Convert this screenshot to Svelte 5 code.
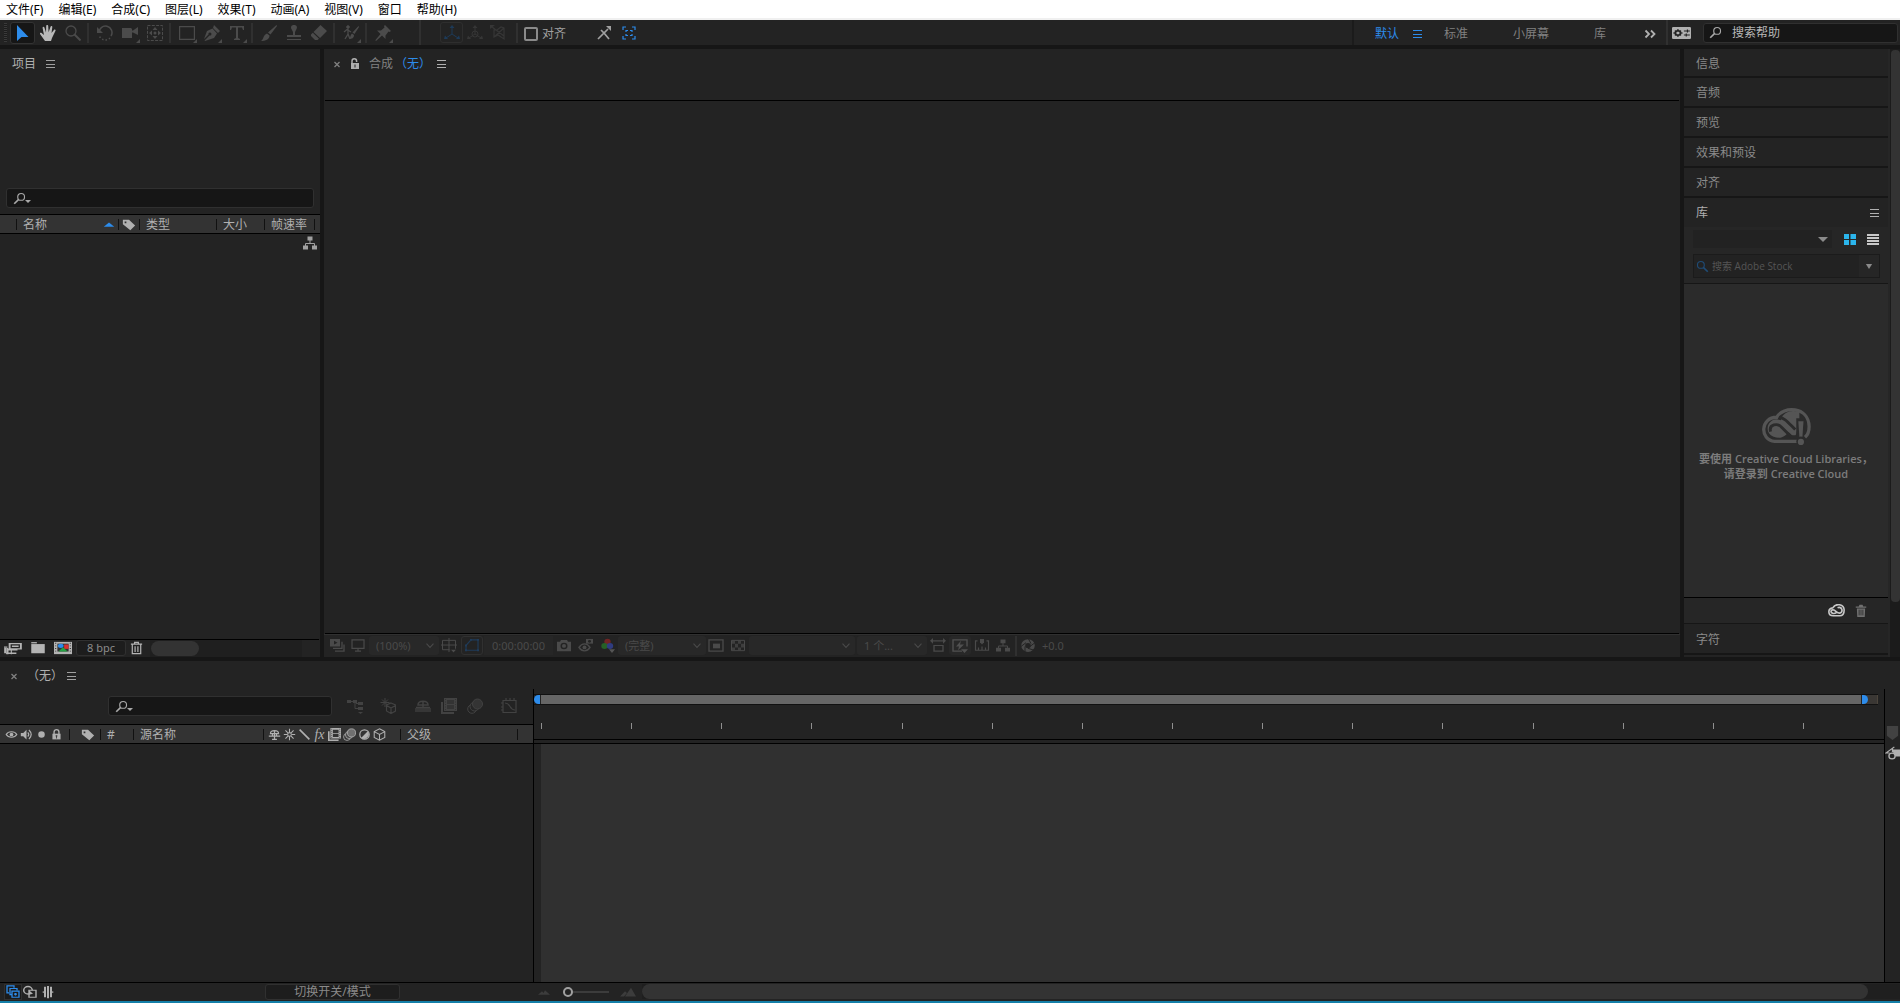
<script>
  const menus = [
    "文件(F)",
    "编辑(E)",
    "合成(C)",
    "图层(L)",
    "效果(T)",
    "动画(A)",
    "视图(V)",
    "窗口",
    "帮助(H)",
  ];

  const toolGroups = [
    [
      { icon: "select", label: "选取工具", state: "active" },
      { icon: "hand", label: "手形工具", state: "ready" },
      { icon: "zoom", label: "缩放工具" },
    ],
    [
      { icon: "rotate", label: "旋转工具" },
      { icon: "camera", label: "摄像机工具", more: true },
      { icon: "anchor", label: "锚点工具" },
    ],
    [
      { icon: "rect", label: "矩形工具", more: true },
      { icon: "pen", label: "钢笔工具", more: true },
      { icon: "type", label: "文字工具", more: true },
    ],
    [
      { icon: "brush", label: "画笔工具" },
      { icon: "stamp", label: "仿制图章工具" },
      { icon: "eraser", label: "橡皮擦工具" },
    ],
    [{ icon: "roto", label: "Roto 笔刷工具", more: true }],
    [{ icon: "pin", label: "操控点工具", more: true }],
  ];

  const axes = [
    { icon: "axisLocal", label: "本地轴模式", on: true },
    { icon: "axisWorld", label: "世界轴模式" },
    { icon: "axisView", label: "视图轴模式" },
  ];

  const closedPanels = ["信息", "音频", "预览", "效果和预设", "对齐"];
  const switches = ["shy", "sun", "slash", "fx", "film", "blur", "adjust", "cube"];
  const ticks = Array.from({ length: 15 }, (_, i) => i);

  let snapping = $state(false);
  let zoomLevel = $state(0);

  const icons = {
    select: `<path fill="currentColor" d="M2 0v16l4.500-4h7z"/>`,
    hand: `<path fill="currentColor" d="M5 16 0 9c-.6-1.200.9-1.700 1.600-1L4 10 2.600 3c-.2-1.300 1.400-1.600 1.800-.4L6 7.500 6.200 1c0-1.400 1.900-1.400 2 0l.4 6.300L10.500 1.700c.4-1.200 2-.9 1.800.5L11.500 8l2.400-3c.8-1 2.100-.3 1.600.8L12 13l-1 3z"/>`,
    zoom: `<g fill="none" stroke="currentColor"><circle cx="6" cy="6" r="5" stroke-width="1.3"/><path stroke-width="2" d="m9.500 9.500 6 6"/></g>`,
    rotate: `<path fill="none" stroke="currentColor" stroke-width="1.500" d="M2 8a6.500 6.500 0 1 1 12 3"/><path fill="none" stroke="currentColor" stroke-width="1.500" stroke-dasharray="1.500 2" d="M13 13a6.500 6.500 0 0 1-11-3"/><path fill="currentColor" d="M0 2v6h6z"/>`,
    camera: `<path fill="currentColor" d="M0 3h9l1 1v1.500h1L16 2v8l-5-2.500h-1V13H0z"/>`,
    anchor: `<path fill="none" stroke="currentColor" stroke-dasharray="3 1.300" d="M.5.500h15v15H.5z"/><path fill="currentColor" d="m8 2 2.500 3h-5zM8 14l2.500-3h-5zM2 8l3-2.500v5zM14 8l-3-2.500v5z"/><circle cx="8" cy="8" r="1.500" fill="currentColor"/>`,
    rect: `<path fill="none" stroke="currentColor" stroke-width="1.200" d="M.6 1.600h14.800v12.800H.6z"/>`,
    pen: `<path fill="currentColor" d="m10 0 6 6-2 2-5-5zM8.500 3.500l4.500 5L10 13 1 16l-.5-.5 5-5a1.500 1.500 0 1 0-1-1L0 14 3 6z"/>`,
    type: `<path fill="currentColor" d="M1 1h14v4h-1l-1-2.500H9V13l2 1v1H5v-1l2-1V2.500H3L2 5H1z"/>`,
    brush: `<path fill="currentColor" d="M15.500 0 16 1 9.500 9.500 7 7.500zM6 8.500l2.500 2c0 4-4 5.500-8.500 5.500 3-2 2-6 6-7.500z"/>`,
    stamp: `<path fill="currentColor" d="M8 0c3 0 3.500 2.500 2.500 4L9 7v3h6v2H1v-2h6V7L5.500 4C4.500 2.500 5 0 8 0zM1 14h14v1H1z"/>`,
    eraser: `<path fill="currentColor" d="m9.500 0 6.500 6-7 7L2.500 7zM1.800 7.700 8 13.700 6.500 15H4L0 11V9.500z"/>`,
    roto: `<g stroke="currentColor" fill="none"><circle cx="5" cy="2" r="1.300" fill="currentColor"/><path stroke-width="1.300" d="M5 3.500V9l-3 5M5 9l2 5M1 7l3-2.500L8 7"/></g><path fill="currentColor" d="M15.500 1 16 2l-4.500 7-2-1.500zM9 8.500l2 1.500c0 3-2 4-5 4 2-2 1-4 3-5.500z"/>`,
    pin: `<path fill="currentColor" d="m10 0 6 6-1.500 1-1-.5-3 4V14L7 10.500 1 16l-.7-.7L5.500 9 2 5.500h4L9.500 2.500 9 1z"/>`,
    axisLocal: `<g fill="none" stroke="currentColor"><path d="M8 2v7L2 13M8 9l6 4"/></g><path fill="currentColor" d="m8 0 2.500 3h-5zM0 14l1-3.500L4 14zM16 14l-1-3.500L12 14z"/>`,
    axisWorld: `<g fill="none" stroke="currentColor"><path d="M8 2v7L2 13M8 9l6 4"/><circle cx="8" cy="9" r="3"/></g><path fill="currentColor" d="m8 0 2.500 3h-5zM0 14l1-3.500L4 14zM16 14l-1-3.500L12 14z"/>`,
    axisView: `<path fill="none" stroke="currentColor" stroke-width="1.200" d="M4 5v7l4-2 6 4V3l-3-1-4 3zM2 2l12 9M4 12l10-9"/><path fill="currentColor" d="M0 0h5L0 4z"/>`,
    snapEdge: `<path fill="none" stroke="currentColor" stroke-width="1.700" d="m2 14 6-6 5 6M5 5l3 3 4-4"/><path fill="currentColor" d="M10 1h5v5z"/>`,
    snapBox: `<path fill="none" stroke="currentColor" stroke-width="1.200" d="M2 5V2h3M11 2h3v3M14 11v3h-3M5 14H2v-3M5 7V5.500h2M9 5.500h2V7M11 9v1.500H9M7 10.500H5V9"/>`,
    menu: `<path fill="none" stroke="currentColor" d="M4 4.500h9M4 8.500h9M4 11.500h9"/>`,
    chevrons: `<path fill="none" stroke="currentColor" stroke-width="1.800" d="m3.500 4.500 3.500 3.500-3.500 3.500M9 4.500 12.500 8 9 11.500"/>`,
    settings: `<rect y="2" width="16" height="12" rx="1" fill="currentColor"/><circle cx="5" cy="8" r="2.300" fill="none" stroke="#232323" stroke-width="1.500"/><path stroke="#232323" d="M5 4v8M1 8h8M2.500 5.500l5 5M7.500 5.500l-5 5M10 6h5M10 10h5M13 4.500v3M12 8.500v3"/><circle cx="5" cy="8" r="1.300" fill="currentColor"/>`,
    search: `<g fill="none" stroke="currentColor"><circle cx="10" cy="6" r="4.200" stroke-width="1.400"/><path stroke-width="2" d="m7 9-5.500 5.500"/></g>`,
    close: `<path fill="none" stroke="currentColor" stroke-width="1.300" d="m5.500 6 5 5M10.500 6l-5 5"/>`,
    unlock: `<path fill="currentColor" d="M4 7h8v6H4z"/><path fill="none" stroke="currentColor" stroke-width="1.500" d="M5 7V5a2.300 2.300 0 0 1 4.600 0v1"/><path fill="#232323" d="M7.500 8.500h1v3h-1z"/>`,
    lock: `<path fill="currentColor" d="M3 7h10v7H3z"/><path fill="none" stroke="currentColor" stroke-width="1.700" d="M5 8V5a3 3 0 0 1 6 0v3"/><path fill="#333" d="M7 9h2v1.500h-.5V13h-1v-2.500H7z"/>`,
    tag: `<path fill="currentColor" fill-rule="evenodd" d="M1 2h7l7 6.500L9.500 14 1 7zM3 4v2h2V4z"/>`,
    sort: `<path fill="currentColor" d="m8 5 6 5H2z"/>`,
    flow: `<path fill="currentColor" d="M5.500 1.500h5v4h-5zM1 10.500h5v4H1zM10 10.500h5v4h-5z"/><path fill="none" stroke="currentColor" d="M8 5v3.500M3.500 11V8.500h9V11"/>`,
    interpret: `<path fill="none" stroke="currentColor" stroke-width="1.700" d="M5 3h10v6H5zM7 6h6M1 8v6M3 7H0M3 10h9M2 14h9"/><path fill="currentColor" d="M2 8h2v7H2zM6 9h1v6H6z"/>`,
    folder: `<path fill="currentColor" d="M2 3.500h12V14H2z"/><path stroke="currentColor" stroke-width="1.500" d="M2 2h5"/>`,
    comp: `<path fill="#b4b4b4" d="M0 1h16v14H0z"/><path fill="#333" d="M3 3h10v9H3z"/><path stroke="#333" stroke-dasharray="1 2" d="M1.500 2v12M14.500 2v12"/><circle cx="6" cy="5.500" r="2.500" fill="#2d8ceb"/><path fill="#d93030" d="M9 4h4v5H9z"/><path fill="#25a244" d="m8 7 4 5H4z"/>`,
    trash: `<path fill="none" stroke="currentColor" stroke-width="1.300" d="M2 3.500h12M6 3V1.500h4V3M3.500 4v10.500h9V4M6.500 6v6.500M9.500 6v6.500"/>`,
    trashFull: `<path fill="currentColor" d="M1 3h4l1-2h4l1 2h4v1.500H1zM2.500 5.500h11L13 16H3z"/><path stroke="#262626" d="M5.500 7v7M8 7v7M10.500 7v7"/>`,
    eye: `<path fill="none" stroke="currentColor" stroke-width="1.500" d="M1.500 8C4 3.500 12 3.500 14.500 8 12 12.500 4 12.500 1.500 8z"/><circle cx="8" cy="8" r="2.300" fill="currentColor"/>`,
    speaker: `<path fill="currentColor" d="M1 6h3l4-4v12l-4-4H1z"/><path fill="none" stroke="currentColor" stroke-width="1.500" d="M9.500 5.500q2.500 2.500 0 5M11 2.500q5.500 5.500 0 11"/>`,
    dot: `<circle cx="8" cy="8" r="4" fill="currentColor"/>`,
    shy: `<path fill="none" stroke="currentColor" stroke-width="1.500" d="M3 7c0-5 10-5 10 0zM1 10h14M8 3v11M5.500 7v3M10.500 7v3M5 14h6"/>`,
    sun: `<circle cx="8" cy="8" r="2.300" fill="none" stroke="currentColor" stroke-width="1.300"/><path stroke="currentColor" stroke-width="1.300" d="M8 1v4M8 11v4M1 8h4M11 8h4M3 3l3 3M10 10l3 3M13 3l-3 3M6 10l-3 3"/>`,
    slash: `<path stroke="currentColor" stroke-width="2" d="m2 2 12 12"/>`,
    film: `<path fill="currentColor" d="M0 4h2v10h11v2H0zM3 0h13v13H3z"/><path fill="#333" d="M6 2h7v4H6zM6 7h7v4H6z"/><path stroke="#333" stroke-dasharray="1 1.500" d="M4.500 1v11M14.500 1v11"/>`,
    blur: `<g stroke="currentColor"><circle cx="5" cy="11" r="4.300" fill="none"/><circle cx="7.500" cy="8.500" r="4.500" fill="#444"/><circle cx="10.500" cy="6" r="5" fill="#707070"/></g>`,
    blurOff: `<g stroke="currentColor"><circle cx="5" cy="11" r="4.300" fill="none"/><circle cx="7.500" cy="8.500" r="4.500" fill="#262626"/><circle cx="10.500" cy="6" r="5" fill="#343434"/></g>`,
    adjust: `<circle cx="8" cy="8" r="5.800" fill="none" stroke="currentColor" stroke-width="1.500"/><path fill="currentColor" d="M4 12A5.700 5.700 0 0 0 12 4z"/>`,
    cube: `<path fill="none" stroke="currentColor" stroke-width="1.300" d="m8 1 6.500 3.500v7L8 15l-6.500-3.500v-7zM1.500 4.500 8 8l6.500-3.500M8 8v7"/>`,
    views: `<path fill="currentColor" fill-rule="evenodd" d="M1 1h10v8H1zm4 2v4l3.500-2z"/><path fill="none" stroke="currentColor" stroke-width="1.300" d="M4 11h9V4M6 14h9V7"/>`,
    monitor: `<path fill="none" stroke="currentColor" stroke-width="1.200" d="M2 2h12v9H2zM8 11v3M5 14h6"/>`,
    down: `<path fill="none" stroke="currentColor" stroke-width="1.200" d="m4 6 4 4 4-4"/>`,
    grid: `<path fill="none" stroke="currentColor" d="M1.500 2.500h13v10h-13zM8 0v15M0 7.500h16"/><path fill="currentColor" stroke="#232323" d="M9 12h7l-3.500 4z"/>`,
    mask: `<path fill="none" stroke="currentColor" stroke-width="1.200" d="M2 13V8l5-6h7v11z"/><path fill="currentColor" d="M1 12h2v2H1zM13 1h2v2h-2zM13 12h2v2h-2zM1 7h2v2H1zM6 1h2v2H6z"/>`,
    snapshot: `<path fill="currentColor" fill-rule="evenodd" d="M1 4h3l1-2h6l1 2h3v10H1zm7 1a3.500 3.500 0 1 0 0 7 3.500 3.500 0 0 0 0-7z"/><circle cx="8" cy="8.500" r="2" fill="currentColor"/>`,
    showShot: `<path fill="none" stroke="currentColor" stroke-width="1.500" d="M1 10c3-5 8-5 11 0-3 5-8 5-11 0z"/><circle cx="6.500" cy="10" r="2" fill="currentColor"/><path fill="currentColor" d="M8 1h7v5H8z"/><circle cx="11.500" cy="3.500" r="1.500" fill="#232323"/>`,
    rgb: `<circle cx="7.500" cy="4" r="3.200" fill="#702424"/><circle cx="4.500" cy="8.500" r="3.200" fill="#266026"/><circle cx="10" cy="8.500" r="3.200" fill="#303c80"/><path fill="#555" d="M9 12h6l-3 4z"/>`,
    region: `<path fill="none" stroke="currentColor" stroke-width="1.300" d="M1 2h14v12H1z"/><path fill="currentColor" d="M5 6h7v5H5z"/>`,
    checker: `<path fill="none" stroke="currentColor" d="M1.500 2.500h13v11h-13z"/><path fill="currentColor" opacity=".7" d="M2 3h3v3H2zM8 3h3v3H8zM5 6h3v4H5zM11 6h3v4h-3zM2 10h3v3H2zM8 10h3v3H8z"/>`,
    aspect: `<path fill="none" stroke="currentColor" stroke-width="1.300" d="M1 3h14M4 8h9v6H4z"/><path fill="currentColor" d="m0 3 3-3v6zM16 3l-3-3v6z"/>`,
    fast: `<path fill="none" stroke="currentColor" stroke-width="1.400" d="M15 9V2H1v12h9"/><path fill="currentColor" d="M9 3 4 9h3l-1 4 6-6H8zM9 12h7l-3.500 4z"/>`,
    timeline: `<path fill="none" stroke="currentColor" stroke-width="1.200" d="M3.500 3H1.500v10h13V3h-2M4.500 10v3M8 9v4M11.500 10v3"/><path fill="currentColor" d="M6 1h4v3.500L8 7 6 4.500z"/>`,
    aperture: `<circle cx="8" cy="8" r="4.800" fill="none" stroke="currentColor" stroke-width="4"/><path stroke="#232323" d="m8 0 3 6M15 5l-5 4M14 13l-6-2M5 15l0-6M1 9l5-4"/>`,
    branch: `<path fill="currentColor" d="M0 2h4v3H0zM6 2h4v3H6zM11 4h5v3h-5zM11 9h5v3h-5zM11 14h5l-2.500 2z"/><path fill="none" stroke="currentColor" d="M3 3.500h4M8 3v7.500h4M9 5.500h3"/>`,
    draft: `<path stroke="currentColor" d="M5 0v9M.5 4.500h9M2 1.500l6 6M8 1.500l-6 6"/><path fill="#232323" stroke="currentColor" stroke-width="1.200" d="m11 5 4.500 2v6L11 15.500 6.500 13V7zM6.500 7.500 11 10l4.500-2.500M11 10v5"/>`,
    shyOff: `<path fill="none" stroke="currentColor" stroke-width="1.500" d="M3 7c0-5 10-5 10 0zM1 9.500h14M8 3v7"/><path fill="currentColor" opacity=".6" d="M0 10h16v4H0z"/>`,
    graph: `<path fill="none" stroke="currentColor" stroke-width="1.200" d="M2 2.500h13v12H2zM4 5c6 0 4 7 10 7M0 5h2M0 9h2M0 12h2M5 0v2M9 0v2M13 0v2"/>`,
    tiles: `<path fill="currentColor" d="M2 3h5v5H2zM8.500 3h5.500v5H8.500zM2 9h5v5H2zM8.500 9h5.500v5H8.500z"/>`,
    list: `<path fill="currentColor" d="M2 3h12v2H2zM2 6h12v2H2zM2 9h12v2H2zM2 12h12v2H2z"/>`,
    triangle: `<path fill="currentColor" d="M3 6h10l-5 5z"/>`,
    layers: `<path fill="none" stroke="currentColor" stroke-width="1.300" d="M4 9H2V1h7v2M7 11H5V4h7v2M7 7h7v7H7zM9 10.500h3M10.500 9v3"/>`,
    modes: `<circle cx="6" cy="6" r="4.300" fill="none" stroke="currentColor" stroke-width="1.500"/><path fill="#232323" stroke="currentColor" stroke-width="1.400" d="M7 6h7v8H7z"/><path fill="currentColor" d="M7 6l4 4-4 1z"/>`,
    stretch: `<path fill="currentColor" d="M4 2h2v12H4V9L2 8l2-1zM10 2h2v5l2 1-2 1v5h-2zM7 1h2v14H7z"/>`,
    smallHill: `<path fill="currentColor" d="m2 11 4-4 1.500 2L9 6l5 5z"/>`,
    bigHill: `<path fill="currentColor" d="m0 13 5-6 2 2-3 4zM5 13l6-10 5 10z"/>`,
    marker: `<path fill="currentColor" d="M2 0h12v11l-6 5-6-5z"/>`,
    button: `<path fill="currentColor" d="M7 4h9v8h-5z"/><path fill="none" stroke="currentColor" stroke-width="1.400" d="M10 1 1 8h4M8 3v4"/><circle cx="7.500" cy="11.500" r="3.300" fill="#232323" stroke="currentColor" stroke-width="1.500"/>`,
  };
</script>

{#snippet icon(name)}
  <svg class="icon" viewBox="0 0 16 16" preserveAspectRatio="none" aria-hidden="true">
    {@html icons[name]}
  </svg>
{/snippet}

{#snippet cloud(bg)}
  <svg class="cloud" viewBox="0 0 48 36" aria-hidden="true">
    <path
      fill="none"
      stroke="currentColor"
      stroke-width="3.2"
      d="M35 32.500H13C-2 31-1 9 15 9c6-11 31-11 31.500 9 0 5-1 8-4 10.500"
    />
    <path
      fill="currentColor"
      d="M15 11c-9 0-13 13-3 17 8 3 12-2 15-5l-9-8c7 6 14 15 15 13l4-14V4C28 1 22 5 20 9l-1 3z"
    />
    <path
      fill="none"
      stroke={bg}
      stroke-width="2.8"
      d="M9 23c-2-7 7-9 11-4l9 9h5M17 9c6 1 8 4 16 12"
    />
    <path fill={bg} d="M34 10h8v15h-8z" />
    <path fill="currentColor" d="M36 13h5l-1 15h-3z" />
    <circle cx="38.500" cy="32.500" r="4.500" fill={bg} />
    <circle cx="38.500" cy="33" r="3" fill="currentColor" />
  </svg>
{/snippet}

<div class="app">
  <nav class="menubar">
    {#each menus as menu}
      <button>{menu}</button>
    {/each}
  </nav>

  <header class="toolbar">
    <span class="grip"></span>
    {#each toolGroups as group}
      <div class="tools">
        {#each group as tool}
          <button class="tool {tool.state ?? ''}" aria-label={tool.label}>
            {@render icon(tool.icon)}
            {#if tool.more}<span class="more"></span>{/if}
          </button>
        {/each}
      </div>
      <span class="sep"></span>
    {/each}
    <span class="sep wide"></span>
    <div class="axes">
      {#each axes as axis}
        <button class="axis" class:on={axis.on} aria-label={axis.label}>
          {@render icon(axis.icon)}
        </button>
      {/each}
    </div>
    <span class="sep"></span>
    <label class="snap"><input type="checkbox" bind:checked={snapping} />对齐</label>
    <button class="snap-option" aria-label="对齐到边缘">{@render icon("snapEdge")}</button>
    <button class="snap-option blue" aria-label="对齐到包围框">{@render icon("snapBox")}</button>

    <div class="workspaces">
      <button class="blue">默认</button>
      <button class="blue ws-menu" aria-label="工作区菜单">{@render icon("menu")}</button>
      <button class="standard">标准</button>
      <button class="small-screen">小屏幕</button>
      <button class="library">库</button>
      <button class="overflow" aria-label="更多工作区">{@render icon("chevrons")}</button>
    </div>
    <div class="help">
      <button class="sync" aria-label="工作区设置">{@render icon("settings")}</button>
      <label class="field help-field">
        {@render icon("search")}
        <input type="text" placeholder="搜索帮助" aria-label="搜索帮助" />
      </label>
    </div>
  </header>

  <main class="upper">
    <section class="panel project">
      <div class="tab project-tab">
        <span class="title">项目</span>
        <button aria-label="面板菜单">{@render icon("menu")}</button>
      </div>
      <div class="preview"></div>
      <label class="field project-search">
        {@render icon("search")}<span class="caret"></span>
        <input type="text" aria-label="搜索项目" />
      </label>
      <table class="columns">
        <thead>
          <tr>
            <th class="c-edge"></th>
            <th class="c-name"><span>名称{@render icon("sort")}</span></th>
            <th class="c-tag">{@render icon("tag")}</th>
            <th class="c-type">类型</th>
            <th class="c-size">大小</th>
            <th class="c-rate">帧速率</th>
            <th></th>
          </tr>
        </thead>
      </table>
      <div class="items">
        <button aria-label="项目流程图">{@render icon("flow")}</button>
      </div>
      <footer class="project-footer">
        <button aria-label="解释素材">{@render icon("interpret")}</button>
        <button aria-label="新建文件夹">{@render icon("folder")}</button>
        <button aria-label="新建合成">{@render icon("comp")}</button>
        <button class="depth">8 bpc</button>
        <button class="bin" aria-label="删除">{@render icon("trash")}</button>
        <div class="scroll"><span></span></div>
      </footer>
    </section>

    <section class="panel viewer">
      <div class="tab viewer-tab">
        <button class="dim" aria-label="关闭">{@render icon("close")}</button>
        <button aria-label="锁定">{@render icon("unlock")}</button>
        <span class="name">合成</span>
        <span class="blue">（无）</span>
        <button aria-label="面板菜单">{@render icon("menu")}</button>
      </div>
      <div class="stage"></div>
      <footer class="viewer-footer">
        <button aria-label="始终预览此视图">{@render icon("views")}</button>
        <button class="primary" aria-label="主查看器">{@render icon("monitor")}</button>
        <label class="drop magnify">
          <select aria-label="放大率"><option>(100%)</option></select>
          {@render icon("down")}
        </label>
        <button aria-label="网格和参考线">{@render icon("grid")}</button>
        <button class="mask" aria-label="蒙版可见性">{@render icon("mask")}</button>
        <button class="time">0:00:00:00</button>
        <div class="shots">
          <button aria-label="拍摄快照">{@render icon("snapshot")}</button>
          <button aria-label="显示快照">{@render icon("showShot")}</button>
          <button aria-label="通道">{@render icon("rgb")}</button>
        </div>
        <label class="drop quality">
          <select aria-label="分辨率"><option>(完整)</option></select>
          {@render icon("down")}
        </label>
        <button aria-label="目标区域">{@render icon("region")}</button>
        <button class="checker" aria-label="透明网格">{@render icon("checker")}</button>
        <label class="drop camera">
          <select aria-label="3D 视图"><option></option></select>
          {@render icon("down")}
        </label>
        <label class="drop layout">
          <select aria-label="视图布局"><option>1 个...</option></select>
          {@render icon("down")}
        </label>
        <button aria-label="像素长宽比">{@render icon("aspect")}</button>
        <button class="fast" aria-label="快速预览">{@render icon("fast")}</button>
        <button aria-label="时间轴">{@render icon("timeline")}</button>
        <button class="chart" aria-label="流程图">{@render icon("flow")}</button>
        <span class="sep"></span>
        <button aria-label="重置曝光度">{@render icon("aperture")}</button>
        <span class="exposure">+0.0</span>
      </footer>
    </section>

    <aside class="side">
      <div class="stack">
        {#each closedPanels as name}
          <button class="closed">{name}</button>
        {/each}
        <section class="libraries">
          <div class="lib-head">
            <span>库</span>
            <button aria-label="面板菜单">{@render icon("menu")}</button>
          </div>
          <div class="lib-tools">
            <div class="lib-row">
              <label class="lib-select">
                <select aria-label="选择库"><option></option></select>
                {@render icon("triangle")}
              </label>
              <button class="tiles" aria-label="图标视图">{@render icon("tiles")}</button>
              <button class="list" aria-label="列表视图">{@render icon("list")}</button>
            </div>
            <div class="stock">
              <span class="glass">{@render icon("search")}</span>
              <input type="text" placeholder="搜索 Adobe Stock" aria-label="搜索 Adobe Stock" />
              <button aria-label="搜索范围">{@render icon("triangle")}</button>
            </div>
          </div>
          <div class="sign-in">
            {@render cloud("#2b2b2b")}
            <p>要使用 Creative Cloud Libraries，<br />请登录到 Creative Cloud</p>
          </div>
          <footer class="lib-footer">
            <button class="cc" aria-label="Creative Cloud">
              <svg viewBox="0 0 16 12" aria-hidden="true">
                <path
                  fill="none"
                  stroke="currentColor"
                  stroke-width="1.5"
                  d="M11 11H5C-.5 11-.5 4 4.500 3.500 7-1 15-.5 15.200 5.500c0 3-1 5.500-4.200 5.500z"
                />
                <path
                  fill="none"
                  stroke="currentColor"
                  stroke-width="1.600"
                  d="M8 8C3 11 1 5 5 5.500c2 0 3 3 6 3 4-1 2-7-2-5"
                />
              </svg>
            </button>
            <button class="lib-bin" aria-label="删除">{@render icon("trashFull")}</button>
          </footer>
        </section>
        <button class="closed last">字符</button>
      </div>
      <div class="side-scroll"><span></span></div>
    </aside>
  </main>

  <section class="timeline">
    <div class="tab timeline-tab">
      <button class="dim" aria-label="关闭">{@render icon("close")}</button>
      <span class="title">（无）</span>
      <button aria-label="面板菜单">{@render icon("menu")}</button>
    </div>
    <div class="timeline-main">
      <div class="layers">
        <div class="layer-tools">
          <label class="field layer-search">
            {@render icon("search")}<span class="caret"></span>
            <input type="text" aria-label="搜索图层" />
          </label>
          <button aria-label="合成微型流程图">{@render icon("branch")}</button>
          <button class="draft" aria-label="草图 3D">{@render icon("draft")}</button>
          <button class="shy" aria-label="隐藏图层">{@render icon("shyOff")}</button>
          <button aria-label="帧混合">{@render icon("film")}</button>
          <button aria-label="运动模糊">{@render icon("blurOff")}</button>
          <button class="graph" aria-label="图表编辑器">{@render icon("graph")}</button>
        </div>
        <table class="columns">
          <thead>
            <tr>
              <th class="t-av">
                <span>
                  {@render icon("eye")}{@render icon("speaker")}{@render icon("dot")}{@render icon("lock")}
                </span>
              </th>
              <th class="t-tag">{@render icon("tag")}</th>
              <th class="t-num">#</th>
              <th class="t-name">源名称</th>
              <th class="t-switch">
                <span>
                  {#each switches as name}
                    {#if name === "fx"}
                      <i>fx</i>
                    {:else}
                      {@render icon(name)}
                    {/if}
                  {/each}
                </span>
              </th>
              <th class="t-parent">父级</th>
              <th></th>
            </tr>
          </thead>
        </table>
      </div>
      <div class="tracks">
        <div class="ruler">
          <div class="work-area">
            <span class="handle start"></span>
            <span class="range"></span>
            <span class="handle-end"><span class="handle end"></span></span>
          </div>
          <div class="ticks">
            {#each ticks as tick (tick)}
              <span></span>
            {/each}
          </div>
        </div>
        <div class="track-body"></div>
      </div>
      <div class="markers">
        <button class="marker" aria-label="合成标记">{@render icon("marker")}</button>
        <button aria-label="合成按钮">{@render icon("button")}</button>
      </div>
    </div>
    <footer class="timeline-footer">
      <button class="blue boxed" aria-label="图层开关">{@render icon("layers")}</button>
      <button aria-label="转换控制">{@render icon("modes")}</button>
      <button aria-label="入点出点">{@render icon("stretch")}</button>
      <button class="toggle">切换开关/模式</button>
      <div class="zoomer">
        {@render icon("smallHill")}
        <input type="range" min="0" max="100" bind:value={zoomLevel} aria-label="缩放时间" />
        {@render icon("bigHill")}
      </div>
      <div class="time-scroll"><span></span></div>
    </footer>
  </section>
  <div class="taskbar-edge"></div>
</div>

<style>
  :global(body) {
    margin: 0;
    background: #161616;
  }

  .app {
    display: flex;
    flex-direction: column;
    height: 100vh;
    overflow: hidden;
    color: #a0a0a0;
    font: 12px/16px "Noto Sans", "Noto Sans CJK SC", sans-serif;
  }

  .app * {
    box-sizing: border-box;
  }

  button,
  input,
  select {
    margin: 0;
    padding: 0;
    border: 0;
    background: none;
    color: inherit;
    font: inherit;
    outline: none;
  }

  button {
    display: flex;
    align-items: center;
    flex: none;
    white-space: nowrap;
  }

  select {
    appearance: none;
    flex: 1;
    min-width: 0;
  }

  .icon {
    display: block;
    flex: none;
    width: 16px;
    height: 16px;
  }

  .blue {
    color: #2d8ceb;
  }

  .dim {
    color: #808080;
  }

  /* menu bar */
  .menubar {
    display: flex;
    flex: none;
    gap: 15px;
    height: 20px;
    padding: 2px 0 0 6px;
    border-bottom: 2px solid #f0f0f0;
    background: #fff;
    color: #000;
  }

  /* toolbar */
  .toolbar {
    display: flex;
    flex: none;
    align-items: center;
    height: 25px;
    background: #232323;
  }

  .grip {
    width: 3px;
    height: 19px;
    margin: 0 3px 0 4px;
    background: repeating-linear-gradient(#3a3a3a 0 1px, #1c1c1c 1px 2px);
  }

  .tools,
  .axes {
    display: flex;
    color: #4b4b4b;
  }

  .tool {
    position: relative;
    justify-content: center;
    width: 25px;
    height: 22px;
  }

  .tool.active {
    border: 1px solid #333;
    border-radius: 3px;
    background: #161616;
    color: #2d8ceb;
  }

  .tool.ready {
    color: #b8b8b8;
  }

  .more {
    position: absolute;
    right: 2px;
    bottom: 1px;
    border: 2px solid transparent;
    border-right-color: #4b4b4b;
    border-bottom-color: #4b4b4b;
  }

  .sep {
    flex: none;
    width: 2px;
    height: 20px;
    margin: 0 3px 0 2px;
    background: #303030;
  }

  .tools:nth-last-of-type(4) + .sep {
    display: none;
  }

  .sep.wide {
    height: 25px;
    margin-left: 24px;
  }

  .axes {
    margin-left: 16px;
    color: #363636;
  }

  .axis {
    justify-content: center;
    width: 23px;
    height: 21px;
    border: 1px solid transparent;
    border-radius: 3px;
  }

  .axis.on {
    border-color: #2e2e2e;
    color: #1d3a58;
  }

  .axes + .sep {
    margin-left: 7px;
  }

  .snap {
    display: flex;
    align-items: center;
    gap: 4px;
    margin: 2px 30px 0 3px;
  }

  .snap input {
    appearance: none;
    width: 14px;
    height: 14px;
    border: 2px solid #8a8a8a;
    border-radius: 2px;
  }

  .snap-option {
    margin-right: 9px;
  }

  .workspaces {
    display: flex;
    align-items: center;
    height: 25px;
    margin-left: auto;
    padding: 2px 0 0 21px;
    border-left: 2px solid #1b1b1b;
    color: #808080;
  }

  .workspaces .blue {
    color: #2d8ceb;
  }

  .ws-menu {
    margin: 0 19px 0 10px;
  }

  .standard {
    margin-right: 45px;
  }

  .small-screen {
    margin-right: 45px;
  }

  .library {
    margin-right: 36px;
  }

  .overflow {
    margin-right: 1px;
    color: #b0b0b0;
  }

  .help {
    display: flex;
    align-items: center;
    height: 25px;
    margin-left: 7px;
    padding-left: 4px;
    border-left: 2px solid #303030;
  }

  .sync {
    width: 20px;
    margin-right: 11px;
    color: #b0b0b0;
  }

  .sync .icon {
    width: 19px;
    height: 16px;
  }

  .field {
    display: flex;
    align-items: center;
    height: 20px;
    padding-left: 6px;
    border: 1px solid #303030;
    border-radius: 3px;
    background: #161616;
  }

  .field input {
    flex: 1;
    min-width: 0;
    align-self: stretch;
  }

  .field .icon {
    width: 13px;
    height: 13px;
    color: #a8a8a8;
  }

  .caret {
    margin: 6px 0 0 -1px;
    border: 3px solid transparent;
    border-top-color: #a8a8a8;
    border-bottom: 0;
  }

  .help-field {
    width: 195px;
    margin-right: 2px;
    padding-left: 5px;
  }

  .help-field input {
    padding-left: 10px;
  }

  .help-field input::placeholder {
    color: #b8b8b8;
  }

  /* upper panels */
  .upper {
    display: flex;
    flex: 608 1 0;
    gap: 4px;
    min-height: 0;
    margin: 4px 0;
  }

  .panel {
    display: flex;
    flex-direction: column;
    background: #232323;
  }

  .tab {
    display: flex;
    flex: none;
    align-items: center;
    height: 29px;
  }

  .title {
    color: #b0b0b0;
  }

  .project {
    flex: none;
    width: 320px;
  }

  .project-tab {
    gap: 6px;
    padding-left: 12px;
  }

  .preview {
    flex: none;
    height: 110px;
  }

  .project-search {
    flex: none;
    margin: 0 6px;
  }

  .columns {
    flex: none;
    width: 100%;
    margin: 6px 0 0;
    border: solid #000;
    border-width: 1px 0;
    border-spacing: 0;
    background: #333;
    table-layout: fixed;
  }

  .columns th {
    height: 18px;
    padding: 1px 0 0 6px;
    background: linear-gradient(#111, #111) right center / 1px 11px no-repeat;
    color: #b0b0b0;
    font-weight: normal;
    text-align: left;
  }

  .columns th:last-child {
    background: none;
  }

  .columns th span {
    display: flex;
    align-items: center;
  }

  .c-edge {
    width: 17px;
  }

  .c-name {
    width: 102px;
  }

  .c-name .icon {
    margin-left: auto;
    margin-right: 3px;
    color: #2d8ceb;
  }

  .columns .c-tag,
  .columns .t-tag {
    padding-left: 3px;
  }

  .c-tag {
    width: 21px;
  }

  .columns .icon {
    width: 14px;
    height: 14px;
  }

  .c-type {
    width: 77px;
  }

  .c-size {
    width: 48px;
  }

  .c-rate {
    width: 50px;
  }

  .items {
    flex: 1;
    padding: 1px 2px;
  }

  .items button {
    margin-left: auto;
  }

  .project-footer {
    display: flex;
    align-items: center;
    gap: 7px;
    height: 18px;
    margin-right: 1px;
    padding: 0 0 1px 4px;
    border-top: 1px solid #000;
    color: #b4b4b4;
  }

  .project-footer .icon {
    width: 18px;
    height: 14px;
  }

  .project-footer .depth {
    justify-content: center;
    width: 50px;
    height: 16px;
    margin-left: -3px;
    border: 1px solid #303030;
    border-radius: 3px;
    background: #1d1d1d;
    color: #8c8c8c;
    font-size: 11px;
  }

  .project-footer .bin {
    margin: 0 -1px 0 -4px;
  }

  .project-footer .bin .icon {
    width: 15px;
  }

  .scroll {
    flex: 1;
    height: 17px;
    margin-right: 17px;
    background: #1f1f1f;
  }

  .scroll span {
    display: block;
    width: 48px;
    height: 15px;
    margin: 1px;
    border-radius: 8px;
    background: #333;
  }

  /* composition viewer */
  .viewer {
    flex: 1;
    min-width: 0;
  }

  .viewer-tab {
    gap: 2px;
    padding-left: 5px;
    color: #b0b0b0;
  }

  .viewer-tab .name {
    margin-left: 4px;
    color: #808080;
  }

  .stage {
    flex: 1;
    margin: 22px 1px 0;
    border: solid #000;
    border-width: 1px 0;
  }

  .viewer-footer {
    display: flex;
    flex: none;
    align-items: center;
    gap: 2px;
    height: 23px;
    padding: 0 0 1px 5px;
    border-top: 1px solid #303030;
    color: #4a4a4a;
    font-size: 11px;
  }

  .viewer-footer .icon {
    height: 15px;
  }

  .primary {
    margin: 0 1px 0 3px;
  }

  .drop {
    display: flex;
    align-items: center;
    flex: none;
    height: 19px;
    padding: 0 1px 0 7px;
    border-radius: 3px;
    background: #282828;
  }

  .drop .icon {
    width: 14px;
    margin-right: 1px;
  }

  .magnify {
    width: 70px;
  }

  .mask,
  .fast {
    justify-content: center;
    width: 22px;
    height: 19px;
    border: 1px solid #303030;
    border-radius: 3px;
    color: #1f3b59;
  }

  .mask {
    margin: 0 -1px 0 2px;
  }

  .fast {
    margin: 0 1px;
    border-color: #282828;
    background: #282828;
    color: #505050;
  }

  .time {
    justify-content: center;
    width: 69px;
    height: 19px;
    background: #262626;
  }

  .shots {
    display: flex;
    gap: 6px;
    margin-left: 1px;
  }

  .quality {
    width: 88px;
  }

  .checker {
    margin: 0 1px 0 4px;
  }

  .camera {
    width: 106px;
  }

  .layout {
    width: 70px;
    margin-right: 1px;
  }

  .chart {
    margin: 0 1px 0 3px;
  }

  .viewer-footer .sep {
    margin: 0 1px;
  }

  .exposure {
    margin-left: 4px;
  }

  /* right column */
  .side {
    display: flex;
    flex: none;
    width: 216px;
    background: #1b1b1b;
  }

  .stack {
    display: flex;
    flex: 1;
    flex-direction: column;
    margin-right: 1px;
    border-right: 2px solid #262626;
    background: #232323;
  }

  .closed {
    width: 100%;
    height: 30px;
    padding: 2px 0 0 12px;
    border-bottom: 2px solid #161616;
    color: #8a8a8a;
  }

  .closed:first-child {
    height: 29px;
  }

  .closed.last {
    height: 31px;
    margin-bottom: 2px;
  }

  .libraries {
    display: flex;
    flex: 1;
    flex-direction: column;
    border-bottom: 1px solid #161616;
  }

  .lib-head {
    display: flex;
    flex: none;
    align-items: center;
    justify-content: space-between;
    height: 29px;
    padding: 1px 6px 0 12px;
    color: #b0b0b0;
  }

  .lib-tools {
    flex: none;
    height: 57px;
    padding: 3px 8px 0 9px;
    border-bottom: 1px solid #161616;
    background: #262626;
  }

  .lib-row {
    display: flex;
    align-items: center;
    height: 18px;
  }

  .lib-select {
    display: flex;
    flex: 1;
    align-items: center;
    height: 18px;
    padding-right: 1px;
    background: #222;
    color: #8a8a8a;
  }

  .tiles {
    margin: 0 7px 0 10px;
    color: #2bb5ec;
  }

  .list {
    margin-right: -1px;
    color: #c8c8c8;
  }

  .stock {
    display: flex;
    align-items: center;
    height: 24px;
    margin-top: 6px;
    border: 1px solid #1b1b1b;
    background: #222;
    font-size: 10px;
  }

  .stock input {
    flex: 1;
    min-width: 0;
    padding-left: 3px;
    font-family: "Open Sans", "Noto Sans CJK SC", sans-serif;
  }

  .stock input::placeholder {
    color: #555;
  }

  .glass {
    margin-left: 2px;
    color: #1f4b75;
    transform: scaleX(-1);
  }

  .glass .icon {
    width: 13px;
    height: 13px;
  }

  .stock button {
    justify-content: center;
    width: 20px;
    height: 22px;
    background: #262626;
    color: #8a8a8a;
  }

  .stock button .icon {
    width: 10px;
  }

  .sign-in {
    display: flex;
    flex: 1;
    flex-direction: column;
    align-items: center;
    justify-content: center;
    gap: 6px;
    padding-top: 8px;
    background: #2b2b2b;
    color: #555;
  }

  .cloud {
    width: 50px;
    height: 37px;
  }

  .sign-in p {
    margin: 0;
    color: #7c7c7c;
    font: 600 11px/15px "Open Sans", "Noto Sans CJK SC", sans-serif;
    text-align: center;
    white-space: nowrap;
  }

  .lib-footer {
    display: flex;
    flex: none;
    align-items: center;
    justify-content: flex-end;
    gap: 10px;
    height: 26px;
    padding: 0 21px 1px 0;
    border-top: 1px solid #000;
    background: #262626;
  }

  .cc {
    color: #c8c8c8;
  }

  .cc svg {
    width: 17px;
    height: 13px;
  }

  .lib-bin {
    color: #707070;
  }

  .lib-bin .icon {
    width: 12px;
    height: 13px;
  }

  .side-scroll {
    flex: none;
    width: 9px;
    padding-top: 1px;
  }

  .side-scroll span {
    display: block;
    height: 91%;
    border-radius: 4px;
    background: #333;
  }

  /* timeline */
  .timeline {
    display: flex;
    flex: 340 1 0;
    flex-direction: column;
    min-height: 0;
    background: #232323;
  }

  .timeline-tab {
    height: 28px;
    padding: 1px 0 0 6px;
  }

  .timeline-tab .title {
    margin-left: 5px;
  }

  .timeline-main {
    display: flex;
    flex: 1;
    min-height: 0;
  }

  .layers {
    flex: none;
    width: 534px;
    border-right: 1px solid #000;
  }

  .layer-tools {
    display: flex;
    align-items: center;
    height: 35px;
    padding: 0 0 1px 108px;
    color: #424242;
  }

  .layer-tools + .columns {
    margin: 0;
  }

  .layer-search {
    width: 224px;
    margin-right: 15px;
  }

  .draft {
    margin: 0 19px 0 17px;
  }

  .shy {
    margin-right: 10px;
  }

  .layer-tools .shy + button {
    margin-right: 10px;
  }

  .graph {
    margin-left: 18px;
  }

  .columns .t-av {
    width: 70px;
    padding-left: 4px;
  }

  .t-tag {
    width: 31px;
  }

  .t-tag .icon {
    margin-left: 8px;
  }

  .t-num {
    width: 33px;
  }

  .t-name {
    width: 130px;
  }

  .columns .t-switch {
    width: 137px;
    padding-left: 3px;
  }

  .t-parent {
    width: 117px;
  }

  .columns .t-av .icon,
  .columns .t-switch .icon {
    width: 13px;
    height: 13px;
    margin: 0 1px;
  }

  .t-switch i {
    width: 15px;
    font: italic 14px/16px "Liberation Serif", serif;
    text-align: center;
  }

  .tracks {
    display: flex;
    flex: 1;
    flex-direction: column;
    min-width: 0;
    border-right: 1px solid #000;
  }

  .ruler {
    flex: none;
    height: 50px;
    margin-top: 5px;
    border-bottom: 1px solid #000;
  }

  .work-area {
    display: flex;
    height: 11px;
    margin-right: 6px;
    border: solid #111;
    border-width: 1px 0;
  }

  .handle {
    flex: none;
    width: 6px;
    height: 9px;
    background: #2d8ceb;
  }

  .start {
    border-radius: 6px 0 0 6px;
  }

  .end {
    display: block;
    border-radius: 0 6px 6px 0;
  }

  .range {
    flex: 1;
    margin: 0 1px;
    background: #666;
  }

  .handle-end {
    width: 16px;
    border: solid #4c453c;
    border-width: 0 1px 0 0;
    background: #3a3734;
  }

  .ticks {
    display: flex;
    align-items: flex-end;
    justify-content: space-between;
    height: 35px;
    padding: 0 80px 10px 7px;
    border-bottom: 1px solid #000;
  }

  .ticks span {
    width: 1px;
    height: 6px;
    background: #909090;
  }

  .track-body {
    flex: 1;
    margin-left: 7px;
    background: #303030;
  }

  .markers {
    flex: none;
    width: 15px;
    padding-top: 37px;
  }

  .markers button {
    color: #b0b0b0;
  }

  .markers .marker {
    margin-bottom: 6px;
    color: #424242;
  }

  .markers .icon {
    width: 15px;
    height: 14px;
  }

  .timeline-footer {
    display: flex;
    flex: none;
    align-items: center;
    height: 19px;
    padding: 0 0 1px 4px;
    border-top: 1px solid #000;
    color: #b0b0b0;
  }

  .timeline-footer button {
    margin-right: 2px;
  }

  .timeline-footer .icon {
    height: 14px;
  }

  .timeline-footer .boxed {
    margin-right: 0;
    border: 1px solid #303030;
    background: #1b1b1b;
  }

  .timeline-footer .toggle {
    justify-content: center;
    width: 135px;
    height: 16px;
    margin: 0 136px 0 207px;
    border: 1px solid #303030;
    border-radius: 3px;
    background: #1d1d1d;
    color: #8a8a8a;
  }

  .zoomer {
    display: flex;
    flex: none;
    align-items: center;
    gap: 11px;
    margin-right: 6px;
    color: #3c3c3c;
  }

  .zoomer input {
    width: 46px;
    height: 14px;
    appearance: none;
  }

  .zoomer input::-webkit-slider-runnable-track {
    height: 2px;
    background: #3c3c3c;
  }

  .zoomer input::-webkit-slider-thumb {
    width: 10px;
    height: 10px;
    margin-top: -4px;
    border: 2px solid #a0a0a0;
    border-radius: 50%;
    appearance: none;
    background: #232323;
  }

  .time-scroll {
    flex: 1;
    padding-right: 32px;
    background: #1f1f1f;
  }

  .time-scroll span {
    display: block;
    height: 15px;
    border-radius: 8px;
    background: #333;
  }

  .taskbar-edge {
    flex: none;
    height: 2px;
    background: #147fa8;
  }
</style>
